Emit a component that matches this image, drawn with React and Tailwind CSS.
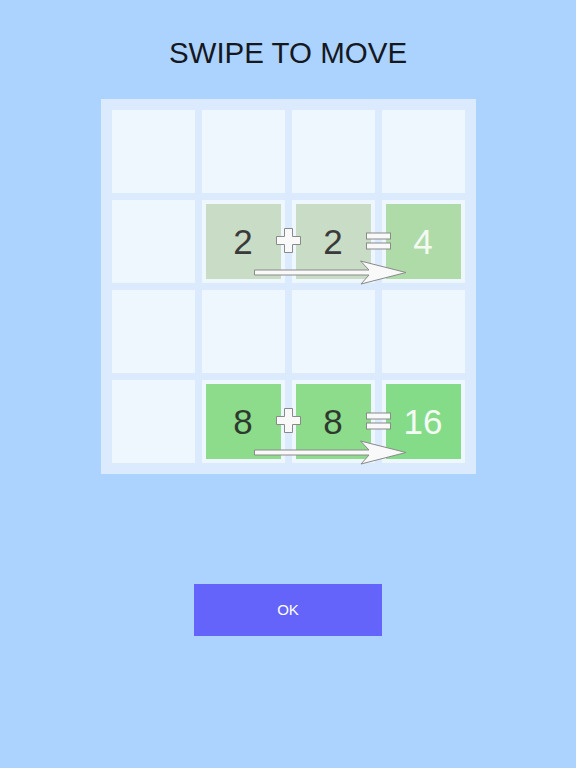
import React from "react";

// 4x4 board, null = empty cell
const board = [
  [null, null, null, null],
  [null, 2, 2, 4],
  [null, null, null, null],
  [null, 8, 8, 16],
];

const tileStyles = {
  2: "bg-[#c8dcc6] text-[#3a3a3a]",
  4: "bg-[#afdba9] text-[#f4faf2]",
  8: "bg-[#8ddc8b] text-[#2f3a2f]",
  16: "bg-[#84dc89] text-[#f4fbf4]",
};

// plus, equals and arrow drawn over one row of tiles
const RowHint = ({ y }) => (
  <g transform={`translate(0 ${y})`} fill="#f9f9f9" stroke="#8a8a8a" strokeWidth="1">
    <path d="M183.5 129.5h8v8h8v8h-8v8h-8v-8h-8v-8h8z" />
    <rect x="265.5" y="134" width="24" height="6" />
    <rect x="265.5" y="144" width="24" height="6" />
    <path d="M153.5 171L268 171L259.5 162L305 173.5L260 185L268 176L153.5 176Z" />
  </g>
);

const App = () => {
  return (
    <div
      className="min-h-screen w-full bg-[#acd3fe] flex flex-col items-center"
      style={{ fontFamily: '"Liberation Sans", Arial, sans-serif' }}
    >
      <h1 className="pt-[38px] text-[29.5px] leading-[30px] text-[#15181f]">
        SWIPE TO MOVE
      </h1>

      <div className="relative mt-[31px] w-[375px] bg-[#dbeafc] p-[11px] grid grid-cols-4 gap-[7px]">
        {board.flat().map((value, i) => (
          <div key={i} className="h-[83px] bg-[#eef6fe] flex">
            {value && (
              <div
                className={`m-1 flex-1 flex items-center justify-center text-[35px] leading-none ${tileStyles[value]}`}
              >
                {value}
              </div>
            )}
          </div>
        ))}
        <svg
          className="absolute inset-0 pointer-events-none"
          width="375"
          height="375"
          viewBox="0 0 375 375"
        >
          <RowHint y={0} />
          <RowHint y={180} />
        </svg>
      </div>

      <button className="mt-[110px] w-[188px] h-[52px] bg-[#6464fb] text-white text-[15px]">
        OK
      </button>
    </div>
  );
};

export default App;
